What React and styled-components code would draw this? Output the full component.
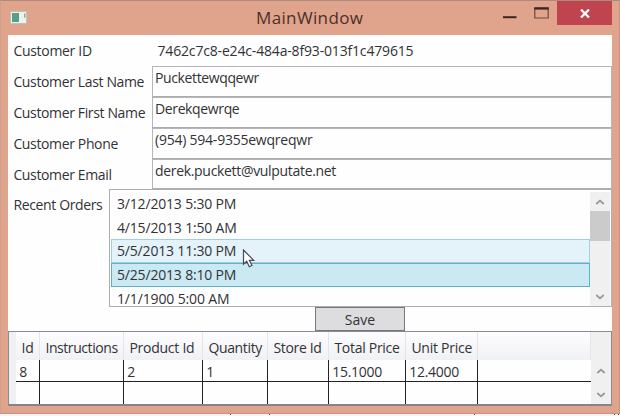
import React from "react";
import styled, { createGlobalStyle } from "styled-components";

const Global = createGlobalStyle`
  * { box-sizing: border-box; }
  body { margin: 0; background: #fff; overflow: hidden; }
`;

const Window = styled.div`
  width: 620px;
  height: 416px;
  display: flex;
  flex-direction: column;
  position: relative;
  font: 14px/20px "Open Sans", "Noto Sans", sans-serif;
  color: #323236;
  background: #e0a48d;
  border-top: 1px solid #a98b83;
  border-left: 1px solid #cf9f8e;
  border-right: 1px solid #c49384;
`;

const TitleBar = styled.header`
  height: 34px;
  flex: none;
  display: flex;
  align-items: flex-start;
  padding-left: 9px;
`;

const AppIcon = styled.svg`
  margin-top: 10px;
  flex: none;
`;

const Title = styled.h1`
  margin: 5px 0 0 229px;
  width: 245px;
  font-size: 17px;
  line-height: 24px;
  font-weight: 400;
  color: #4a3029;
  letter-spacing: ${(p) => p.$ls}px;
`;

const Controls = styled.div`
  display: flex;
  svg { flex: none; }
`;

const CloseButton = styled.button`
  width: 55px;
  height: 24px;
  padding: 0;
  border: 0;
  background: #bf444f;
  display: grid;
  place-items: center;
`;

const Client = styled.main`
  width: 604px;
  height: 371px;
  margin-left: 7px;
  background: #fefefe;
  display: flex;
  flex-direction: column;
`;

const Text = styled.span`
  display: block;
  white-space: nowrap;
  letter-spacing: ${(p) => p.$ls || 0}px;
`;

const FieldRow = styled.div`
  display: flex;
  height: ${(p) => p.$h}px;
  flex: none;
`;

const Label = styled(Text)`
  width: ${(p) => p.$w || 144}px;
  flex: none;
  padding: 6px 0 0 5.4px;
`;

const Plain = styled(Text)`
  padding: 6px 0 0 5.5px;
`;

const Input = styled.div`
  width: 460px;
  height: 100%;
  border: 1px solid #b5b5ba;
  border-bottom-color: #adadb0;
  padding: 1px 0 0 2px;
  background: #fefefe;
`;

const ListBox = styled.div`
  width: 503px;
  height: 118px;
  border: 1px solid #adadb2;
  display: flex;
  justify-content: space-between;
  padding: 2px 1px 0 1px;
  overflow: hidden;
`;

const Items = styled.div`
  width: 480px;
`;

const Item = styled.div`
  height: 23.7px;
  padding: 1px 0 0 5px;
  border: 1px solid transparent;
  ${(p) => p.$state === "hover" && "background:#e4f2fa;border-color:#9fcfe0;"}
  ${(p) => p.$state === "selected" && "background:#cae9f2;border-color:#62afc9;"}
`;

const ScrollBar = styled.div`
  width: 20px;
  background: #f0f0f1;
  display: flex;
  flex-direction: column;
  align-items: center;
`;

const Thumb = styled.div`
  width: 20px;
  height: 30px;
  background: #cbcbcc;
  margin-bottom: auto;
`;

const ArrowBox = styled.div`
  height: ${(p) => p.$h}px;
  display: grid;
  place-items: center;
`;

const ButtonRow = styled.div`
  height: 24px;
  padding-left: 307px;
`;

const SaveButton = styled.button`
  display: grid;
  place-items: center;
  width: 90px;
  height: 24px;
  padding: 2px 0 0;
  font: inherit;
  color: inherit;
  background: #dddddf;
  border: 1px solid #77777b;
`;

const DataGrid = styled.section`
  height: 75px;
  border: 1px solid #898b98;
  border-bottom: 2px solid #85848c;
  display: flex;
`;

const RowHeader = styled.div`
  width: 7px;
  background: #f0f0f4;
`;

const GridBody = styled.div`
  width: 575px;
`;

const GridRow = styled.div`
  display: grid;
  grid-template-columns: 24px 84px 79px 65px 61px 77px 72px 1fr;
  height: ${(p) => p.$h}px;
  border-bottom: ${(p) => (p.$line ? "1px solid #222" : "0")};
`;

const HeaderRow = styled(GridRow)`
  background: linear-gradient(#fdfdfe, #f0f1f4);
`;

const HeaderCell = styled.div`
  border-right: 1px solid #e5e5e9;
  padding: 6px 0 0 5.4px;
`;

const Cell = styled.div`
  border-right: ${(p) => (p.$last ? "0" : "1px solid #222")};
  padding: 3px 0 0 3.3px;
  line-height: 18px;
  background: #fefefe;
`;

const GridScroll = styled(ScrollBar)`
  padding-top: 28px;
  justify-content: space-between;
`;

const Cursor = styled.svg`
  position: absolute;
  left: 241px;
  top: 248px;
`;

const Backdrop = styled.svg`
  display: block;
  margin: auto 0 0 -1px;
`;

const Arrow = ({ down }) => (
  <svg width="10" height="6" viewBox="0 0 10 6" fill="none" stroke="#98989a" strokeWidth="1.8">
    <path d={down ? "M1.3 1 5 4.4 8.7 1" : "M1.3 5 5 1.6 8.7 5"} />
  </svg>
);

const fields = [
  ["Customer Last Name", -0.36, "Puckettewqqewr", -0.38, 31],
  ["Customer First Name", -0.36, "Derekqewrqe", -0.37, 31],
  ["Customer Phone", -0.36, "(954) 594-9355ewqreqwr", -0.23, 31],
  ["Customer Email", -0.36, "derek.puckett@vulputate.net", -0.32, 30],
];

const orders = [
  ["3/12/2013 5:30 PM", -0.18],
  ["4/15/2013 1:50 AM", -0.18],
  ["5/5/2013 11:30 PM", -0.18, "hover"],
  ["5/25/2013 8:10 PM", -0.18, "selected"],
  ["1/1/1900 5:00 AM", -0.14],
];

const columns = [
  ["Id", 0, "8", 0],
  ["Instructions", -0.42, "", 0],
  ["Product Id", -0.25, "2", 0],
  ["Quantity", -0.35, "1", 0],
  ["Store Id", -0.33, "", 0],
  ["Total Price", -0.28, "15.1000", -0.3],
  ["Unit Price", -0.25, "12.4000", -0.3],
  ["", 0, "", 0],
];

export default function App() {
  return (
    <>
      <Global />
      <Window>
        <TitleBar>
          <AppIcon width="17" height="13" viewBox="0 0 17 13">
            <rect x=".5" y=".5" width="16" height="12" fill="#eef2ee" stroke="#c3bfb7" />
            <rect x="2" y="2" width="7" height="9" fill="#56a08a" />
            <path d="M14.8 2.5v4" stroke="#747b78" />
          </AppIcon>
          <Title $ls={0.36}>MainWindow</Title>
          <Controls>
            <svg width="56" height="24" viewBox="502 1 56 24">
              <path d="M504 17.2h13.5" stroke="#3b2620" strokeWidth="2" />
              <path d="M535.8 8.5v9.5h13.4v-9.5" fill="none" />
              <path d="M535.8 8.5v9.5h13.4v-9.5" fill="none" stroke="#6b4a3d" strokeWidth="1.2" />
              <path d="M535.2 8.4h14.6" stroke="#3b2620" strokeWidth="2.4" />
            </svg>
            <CloseButton>
              <svg width="10" height="9" viewBox="0 0 10 9">
                <path d="M1 .5 9 8.5M9 .5 1 8.5" stroke="#fff" strokeWidth="2.2" />
              </svg>
            </CloseButton>
          </Controls>
        </TitleBar>
        <Client>
          <FieldRow $h={31}>
            <Label $ls={-0.3}>Customer ID</Label>
            <Plain $ls={-0.17}>7462c7c8-e24c-484a-8f93-013f1c479615</Plain>
          </FieldRow>
          {fields.map(([label, labelSpacing, value, valueSpacing, h]) => (
            <FieldRow key={label} $h={h}>
              <Label $ls={labelSpacing}>{label}</Label>
              <Input><Text $ls={valueSpacing}>{value}</Text></Input>
            </FieldRow>
          ))}
          <FieldRow $h={118}>
            <Label $w={101} $ls={-0.36}>Recent Orders</Label>
            <ListBox>
              <Items>
                {orders.map(([t, ls, state]) => (
                  <Item key={t} $state={state}><Text $ls={ls}>{t}</Text></Item>
                ))}
              </Items>
              <ScrollBar>
                <ArrowBox $h={19}><Arrow /></ArrowBox>
                <Thumb />
                <ArrowBox $h={19}><Arrow down /></ArrowBox>
              </ScrollBar>
            </ListBox>
          </FieldRow>
          <ButtonRow>
            <SaveButton><Text>Save</Text></SaveButton>
          </ButtonRow>
          <DataGrid>
            <RowHeader />
            <GridBody>
              <HeaderRow $h={28}>
                {columns.map(([t, ls], i) => <HeaderCell key={i}><Text $ls={ls}>{t}</Text></HeaderCell>)}
              </HeaderRow>
              <GridRow $h={22} $line>
                {columns.map(([, , v, ls], i) => <Cell key={i} $last={i === 7}><Text $ls={ls}>{v}</Text></Cell>)}
              </GridRow>
              <GridRow $h={22}>
                {columns.map((_, i) => <Cell key={i} $last={i === 7} />)}
              </GridRow>
            </GridBody>
            <GridScroll>
              <ArrowBox $h={22}><Arrow /></ArrowBox>
              <ArrowBox $h={18}><Arrow down /></ArrowBox>
            </GridScroll>
          </DataGrid>
        </Client>
        <Backdrop width="620" height="3" viewBox="0 0 620 3">
          <path d="M0 .5h620" stroke="#bd958a" />
          <path d="M0 2h620" stroke="#f8f3f1" strokeWidth="2" />
          <path d="M230 1.5h1M269 1.5h1M474 1.5h1M614 1.5h1M618 1.5h1" stroke="#55423c" />
        </Backdrop>
        <Cursor width="14" height="20" viewBox="0 0 14 20">
          <path d="M1.5 1v14.2l3.2-2.9 2.6 5.4 2.6-1.2-2.5-5.2h4.3z" fill="#fff" stroke="#454b55" strokeWidth="1.2" />
        </Cursor>
      </Window>
    </>
  );
}
